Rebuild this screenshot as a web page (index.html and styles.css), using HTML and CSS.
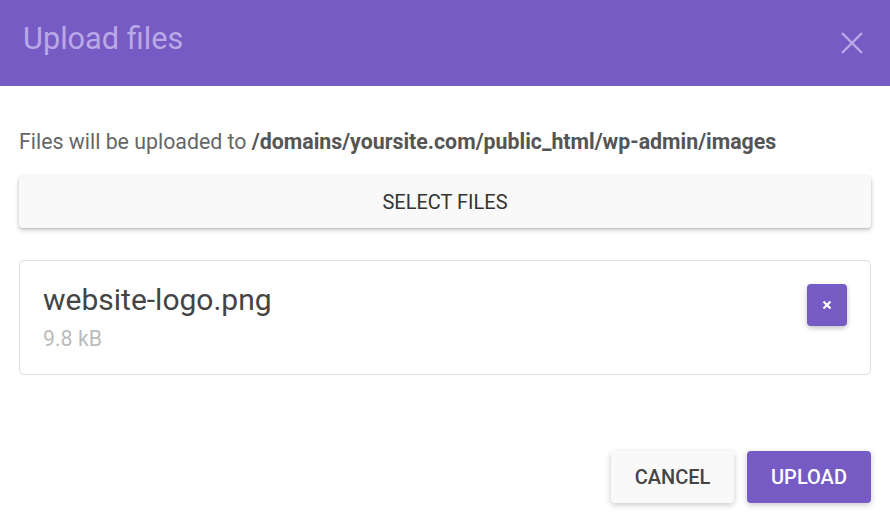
FILE: index.html
```html
<!DOCTYPE html>
<html>
<head>
<meta charset="utf-8">
<link rel="stylesheet" href="styles.css">
</head>
<body>
<div class="dialog">
  <header class="head">
    <h1 class="title">Upload files</h1>
    <button class="close" aria-label="Close">
      <svg width="22" height="22" viewBox="0 0 22 22"><path d="M1 1L21 21M21 1L1 21" stroke="#b9a9e6" stroke-width="2.4" fill="none"/></svg>
    </button>
  </header>
  <main class="body">
    <p class="dest">Files will be uploaded to <b>/domains/yoursite.com/public_html/wp-admin/images</b></p>
    <button class="select">SELECT FILES</button>
    <div class="file">
      <div class="info">
        <div class="name">website-logo.png</div>
        <div class="size">9.8 kB</div>
      </div>
      <button class="remove" aria-label="Remove">
        <svg width="10" height="10" viewBox="0 0 10 10"><path d="M1.5 1.5L8.5 8.5M8.5 1.5L1.5 8.5" stroke="#fff" stroke-width="2.2" fill="none"/></svg>
      </button>
    </div>
  </main>
  <footer class="foot">
    <button class="btn cancel">CANCEL</button>
    <button class="btn upload">UPLOAD</button>
  </footer>
</div>
</body>
</html>
```
FILE: styles.css
```css
* { box-sizing: border-box; }
html, body { margin: 0; padding: 0; background: #fff; }
body { font-family: Roboto, "Liberation Sans", sans-serif; width: 890px; height: 524px; overflow: hidden; }
button { font-family: inherit; border: none; cursor: pointer; }
.dialog { display: flex; flex-direction: column; height: 524px; }
.head {
  height: 86px; background: #775bc5; display: flex; align-items: flex-start;
  justify-content: space-between; padding: 0 27px 0 23px;
}
.title { margin: 21px 0 0; font-size: 30.7px; font-weight: 400; color: #b9a9e6; line-height: 36px; }
.close { background: none; padding: 0; margin-top: 32px; width: 22px; height: 22px; display: flex; }
.body { padding: 0 19px; }
.dest { margin: 43px 0 0; font-size: 21.33px; color: #666; line-height: 26px; }
.dest b { font-weight: 700; color: #555; }
.select {
  margin-top: 21px; width: 100%; height: 52px; background: #f9f9f9; border-radius: 4px;
  box-shadow: 0 2px 5px rgba(0,0,0,0.22), 0 1px 2px rgba(0,0,0,0.1);
  font-size: 20px; color: #333; font-weight: 400; padding-top: 1px;
}
.file {
  margin-top: 32px; height: 115px; border: 1px solid #ddd; border-radius: 5px;
  display: flex; justify-content: space-between; align-items: flex-start; padding: 21px 23px 0 23px;
}
.name { font-size: 30px; color: #444; line-height: 36px; }
.size { font-size: 21.33px; color: #bbb; margin-top: 8px; line-height: 26px; }
.remove {
  margin-top: 2px; width: 40px; height: 42px; background: #775bc5; border-radius: 4px;
  box-shadow: 0 2px 5px rgba(0,0,0,0.25); display: flex; align-items: center; justify-content: center; padding: 0;
}
.foot { margin-top: auto; padding: 0 19px 21px; display: flex; justify-content: flex-end; gap: 13px; }
.btn { height: 52px; border-radius: 4px; font-size: 20px; font-weight: 500; box-shadow: 0 2px 6px rgba(0,0,0,0.22); }
.cancel { width: 123px; background: #f9f9f9; color: #444; }
.upload { width: 124px; background: #775bc5; color: #fff; }
```
